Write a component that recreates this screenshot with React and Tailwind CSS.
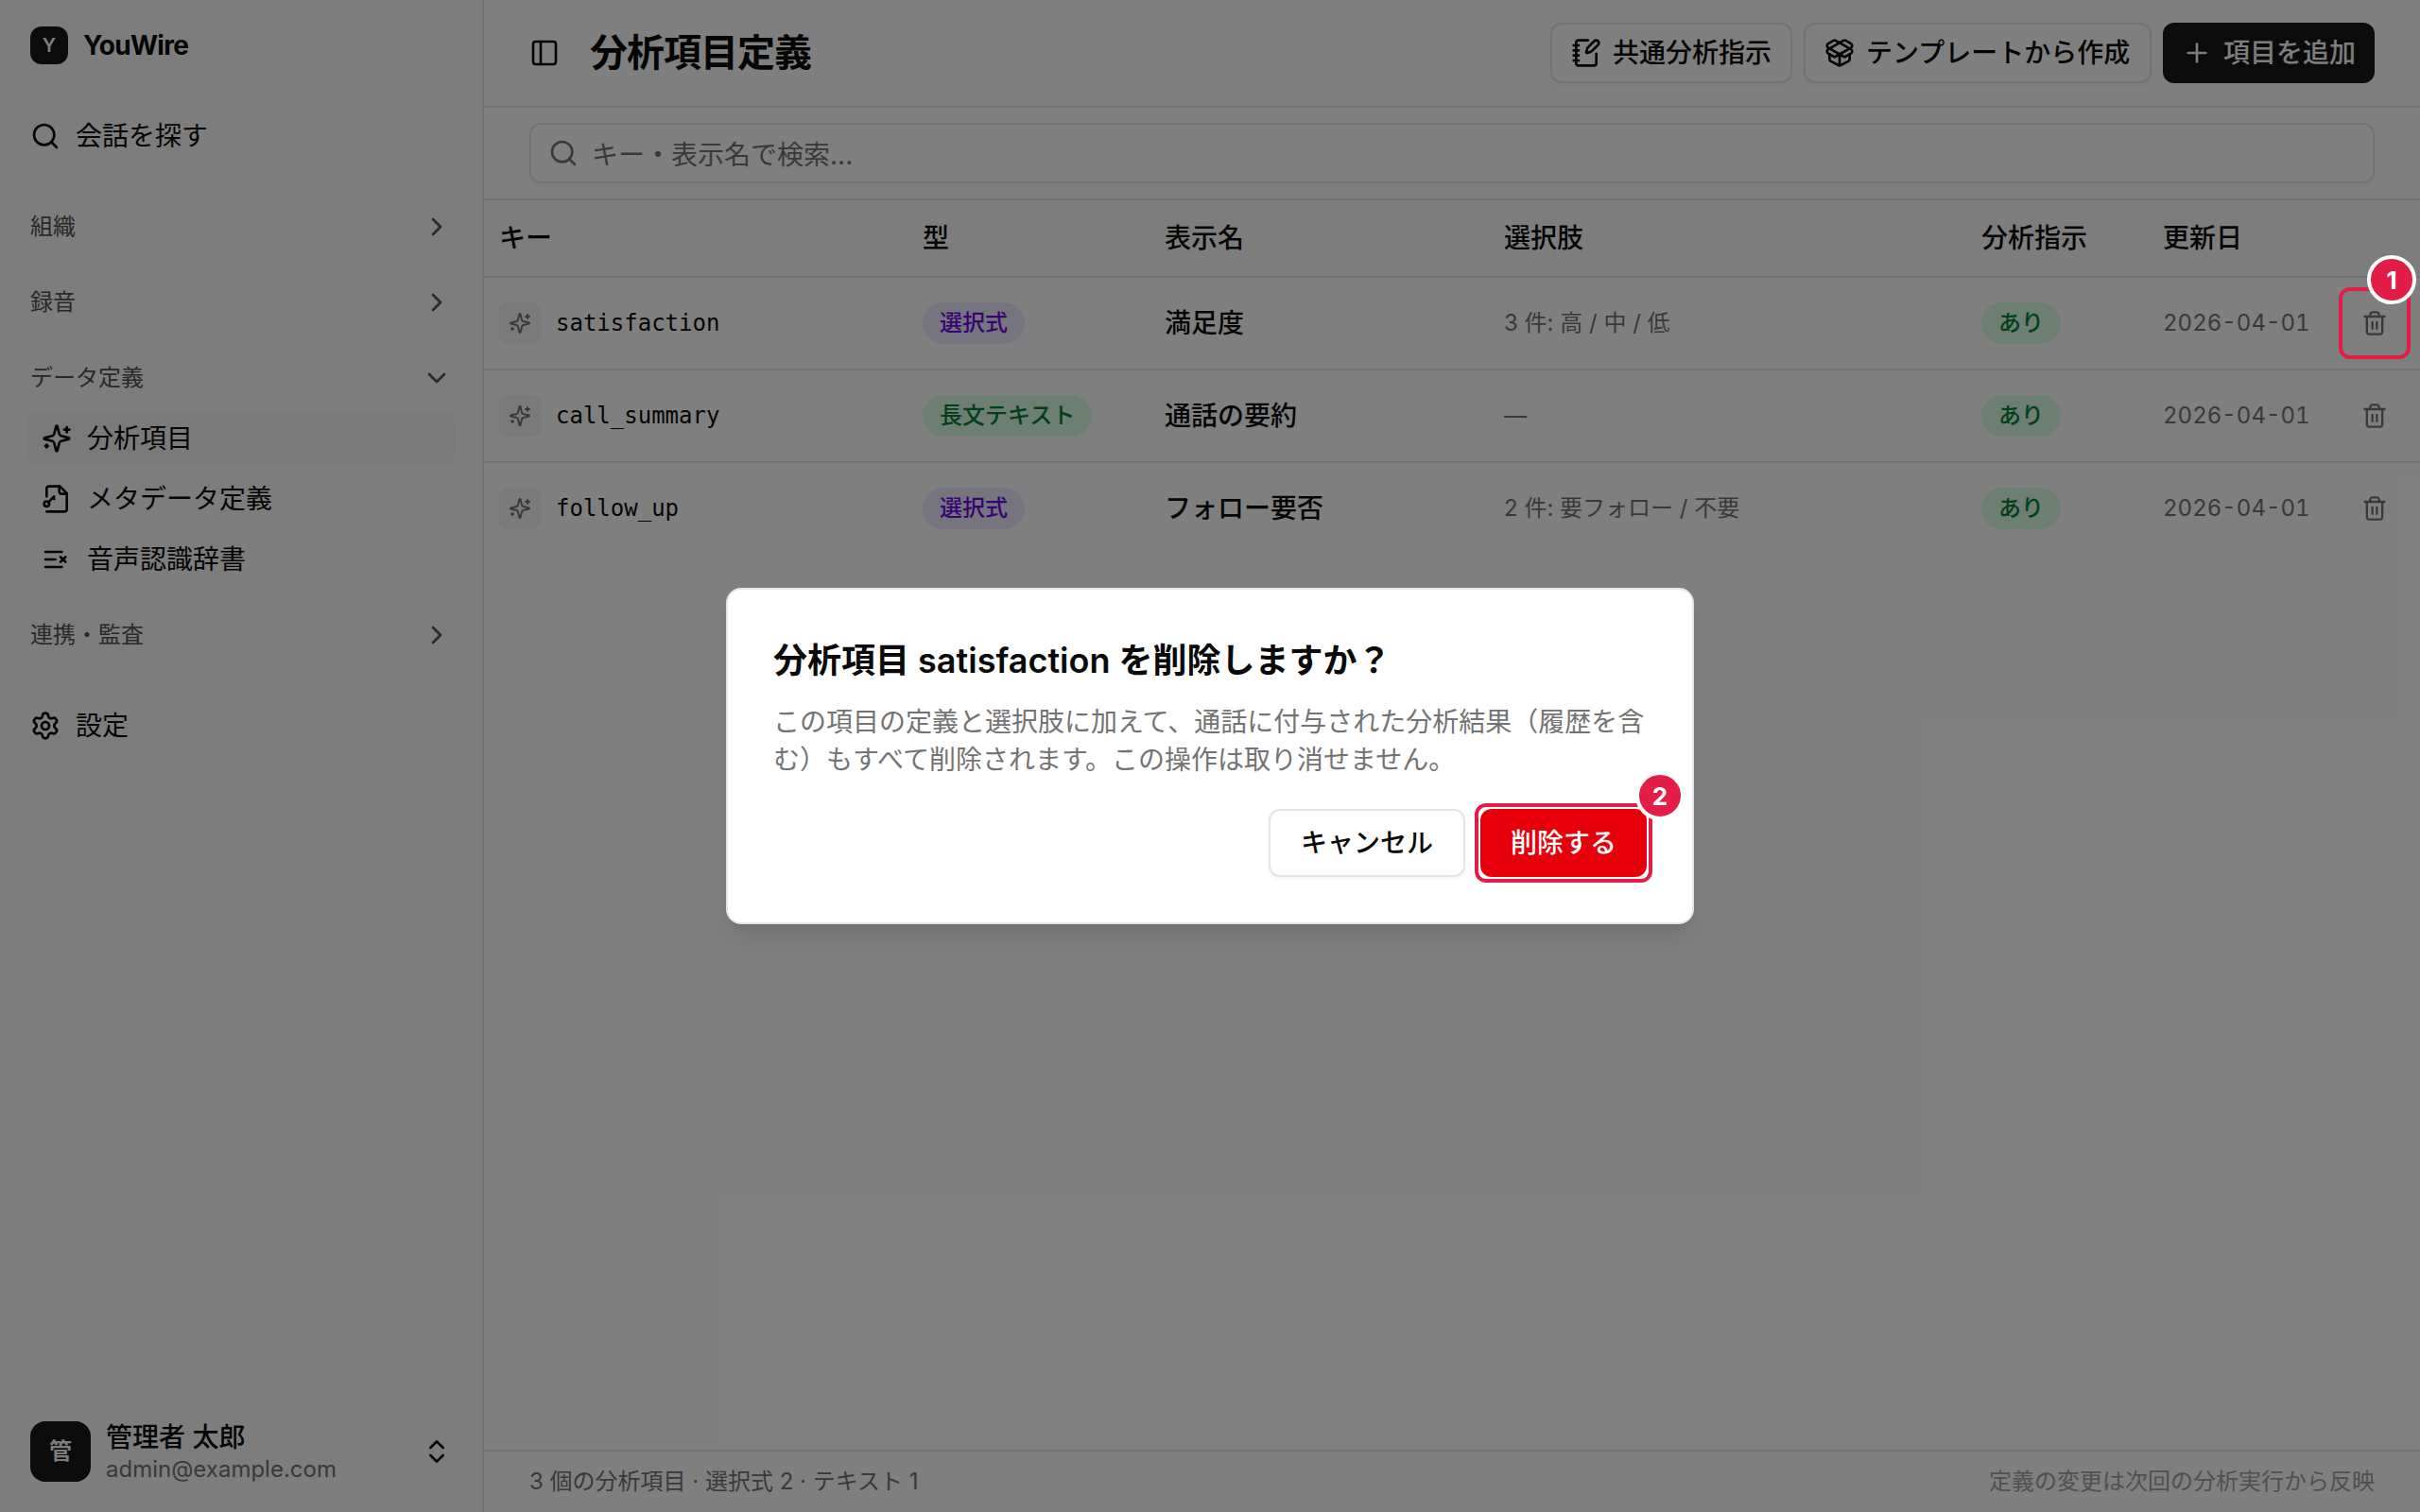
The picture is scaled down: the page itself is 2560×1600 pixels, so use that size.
import React from 'react';
import {
  ChevronDown,
  ChevronRight,
  ChevronsUpDown,
  NotebookPen,
  PackageOpen,
  PanelLeft,
  Plus,
  Search,
  Settings,
} from 'lucide-react';
import clsx from 'clsx';

const rows = [
  { key: 'satisfaction', type: '選択式', tone: 'violet', name: '満足度', options: '3 件: 高 / 中 / 低' },
  { key: 'call_summary', type: '長文テキスト', tone: 'green', name: '通話の要約', options: '—' },
  { key: 'follow_up', type: '選択式', tone: 'violet', name: 'フォロー要否', options: '2 件: 要フォロー / 不要' },
];

const columns = [
  { label: 'キー', width: 'w-[448px]' },
  { label: '型', width: 'w-64' },
  { label: '表示名', width: 'w-[359px]' },
  { label: '選択肢', width: 'w-[505px]' },
  { label: '分析指示', width: 'w-48' },
  { label: '更新日', width: 'w-48' },
  { label: '', width: 'w-24' },
];

const Icon = ({ className, children }) => (
  <svg
    viewBox="0 0 24 24"
    fill="none"
    stroke="currentColor"
    strokeWidth="2"
    strokeLinecap="round"
    strokeLinejoin="round"
    className={clsx('shrink-0', className)}
  >
    {children}
  </svg>
);

const SparklesIcon = ({ className }) => (
  <Icon className={className}>
    <path d="M9.937 15.5A2 2 0 0 0 8.5 14.063l-6.135-1.582a.5.5 0 0 1 0-.962L8.5 9.936A2 2 0 0 0 9.937 8.5l1.582-6.135a.5.5 0 0 1 .963 0L14.063 8.5A2 2 0 0 0 15.5 9.937l6.135 1.581a.5.5 0 0 1 0 .964L15.5 14.063a2 2 0 0 0-1.437 1.437l-1.582 6.135a.5.5 0 0 1-.963 0z" />
    <path d="M20 3v4" />
    <path d="M22 5h-4" />
    <path d="M4 17v2" />
    <path d="M5 18H3" />
  </Icon>
);

const FileKeyIcon = ({ className }) => (
  <Icon className={className}>
    <path d="M4 10V4a2 2 0 0 1 2-2h8.5L20 7.5V20a2 2 0 0 1-2 2H4" />
    <path d="M14 2v4a2 2 0 0 0 2 2h4" />
    <circle cx="4" cy="16" r="2" />
    <path d="m10 10-4.5 4.5" />
    <path d="m9 11 1 1" />
  </Icon>
);

const ListXIcon = ({ className }) => (
  <Icon className={className}>
    <path d="M11 12H3" />
    <path d="M16 6H3" />
    <path d="M16 18H3" />
    <path d="m19 10-4 4" />
    <path d="m15 10 4 4" />
  </Icon>
);

const TrashIcon = ({ className }) => (
  <Icon className={className}>
    <path d="M3 6h18" />
    <path d="M19 6v14c0 1-1 2-2 2H7c-1 0-2-1-2-2V6" />
    <path d="M8 6V4c0-1 1-2 2-2h4c1 0 2 1 2 2v2" />
    <path d="M10 11v6" />
    <path d="M14 11v6" />
  </Icon>
);

const NavGroup = ({ label, open, children }) => (
  <div className="flex flex-col pb-4">
    <button className="flex h-16 items-center justify-between px-8 text-2xl text-[#525252]">
      <span className="pb-px">{label}</span>
      {open ? <ChevronDown className="size-8" /> : <ChevronRight className="size-8" />}
    </button>
    {children}
  </div>
);

const NavItem = ({ icon: ItemIcon, label, active }) => (
  <a
    className={clsx('mx-7 flex h-14 items-center gap-4 rounded-xl px-4 text-[28px]', active && 'bg-neutral-100')}
  >
    <ItemIcon className="size-8" />
    <span>{label}</span>
  </a>
);

const Sidebar = () => (
  <aside className="flex w-[512px] shrink-0 flex-col border-r-2 border-neutral-200 bg-neutral-50">
    <div className="mt-7 flex h-10 items-center gap-4 px-8">
      <div className="flex size-10 items-center justify-center rounded-xl bg-[#171717] text-xl font-semibold text-neutral-50">
        Y
      </div>
      <span className="text-[28px] font-bold tracking-tight">YouWire</span>
    </div>
    <a className="mt-11 flex h-16 items-center gap-4 px-8 text-[28px]">
      <Search className="size-8" />
      会話を探す
    </a>
    <nav className="mt-8 flex flex-col">
      <NavGroup label="組織" />
      <NavGroup label="録音" />
      <NavGroup label="データ定義" open>
        <div className="mt-1 mb-1 flex flex-col gap-2">
          <NavItem icon={SparklesIcon} label="分析項目" active />
          <NavItem icon={FileKeyIcon} label="メタデータ定義" />
          <NavItem icon={ListXIcon} label="音声認識辞書" />
        </div>
      </NavGroup>
      <NavGroup label="連携・監査" />
      <a className="mt-4 flex h-16 items-center gap-4 px-8 text-[28px]">
        <Settings className="size-8" />
        設定
      </a>
    </nav>
    <div className="mt-auto mb-8 flex h-16 items-center gap-4 px-8">
      <div className="flex size-16 items-center justify-center rounded-2xl bg-[#171717] text-2xl font-semibold text-neutral-50">
        管
      </div>
      <div className="flex flex-1 flex-col pt-0.5">
        <span className="text-[28px] leading-9 font-medium">管理者 太郎</span>
        <span className="text-2xl leading-8 text-neutral-500">admin@example.com</span>
      </div>
      <ChevronsUpDown className="size-8" />
    </div>
  </aside>
);

const HeaderButton = ({ icon: ButtonIcon, children, primary, className }) => (
  <button
    className={clsx(
      'flex h-16 shrink-0 items-center gap-3 rounded-xl px-5 text-[28px] font-medium whitespace-nowrap',
      primary
        ? 'bg-[#171717] text-neutral-50'
        : 'border-2 border-neutral-200 bg-white shadow-[0_2px_4px_rgba(0,0,0,0.05)]',
      className
    )}
  >
    <ButtonIcon className="size-8" />
    {children}
  </button>
);

const Badge = ({ tone, children }) => (
  <span
    className={clsx(
      'inline-flex h-11 items-center rounded-full px-[18px] text-2xl font-medium',
      tone === 'violet' ? 'bg-violet-100 text-violet-700' : 'bg-green-100 text-green-700'
    )}
  >
    {children}
  </span>
);

const ItemTable = () => (
  <table className="w-full table-fixed border-separate border-spacing-0 text-left">
    <thead>
      <tr className="h-[82px] bg-neutral-50">
        {columns.map((col, i) => (
          <th key={i} className={clsx('border-b-2 border-neutral-200 px-4 text-[28px] font-medium', col.width)}>
            {col.label}
          </th>
        ))}
      </tr>
    </thead>
    <tbody>
      {rows.map((row) => (
        <tr
          key={row.key}
          className="h-[98px] *:border-b-2 *:border-neutral-200 *:px-4 *:py-0 last:*:border-transparent"
        >
          <td>
            <div className="flex items-center gap-4">
              <span className="flex size-11 items-center justify-center rounded-lg bg-neutral-100 text-neutral-500">
                <SparklesIcon className="size-6" />
              </span>
              <span className="font-['DejaVu_Sans_Mono',monospace] text-2xl">{row.key}</span>
            </div>
          </td>
          <td>
            <div className="flex">
              <Badge tone={row.tone}>{row.type}</Badge>
            </div>
          </td>
          <td className="text-[28px] font-medium">{row.name}</td>
          <td className="text-2xl text-neutral-500">{row.options}</td>
          <td>
            <div className="flex">
              <Badge tone="green">あり</Badge>
            </div>
          </td>
          <td className="text-2xl whitespace-nowrap text-neutral-500 tabular-nums">2026-04-01</td>
          <td>
            <button className="flex size-16 items-center justify-center text-neutral-500">
              <TrashIcon className="size-7" />
            </button>
          </td>
        </tr>
      ))}
    </tbody>
  </table>
);

// Numbered frame that points at one step of the flow
const Callout = ({ step, className, badgeClassName }) => (
  <div className={clsx('pointer-events-none absolute rounded-xl border-4 border-[#e11d48]', className)}>
    <span
      className={clsx(
        'absolute flex size-[52px] items-center justify-center rounded-full border-4 border-white bg-[#e11d48] text-[26px] font-bold text-white',
        badgeClassName
      )}
    >
      {step}
    </span>
  </div>
);

const DeleteDialog = () => (
  <div className="w-[1024px] rounded-2xl border-2 border-neutral-200 bg-white p-12 shadow-[0_20px_30px_-6px_rgba(0,0,0,0.1),0_8px_12px_-8px_rgba(0,0,0,0.1)]">
    <h2 className="text-4xl leading-[54px] font-semibold">分析項目 satisfaction を削除しますか？</h2>
    <p className="mt-[18px] text-[28px] leading-10 text-neutral-500">
      この項目の定義と選択肢に加えて、通話に付与された分析結果（履歴を含む）もすべて削除されます。この操作は取り消せません。
    </p>
    <div className="mt-8 flex justify-end gap-4">
      <button className="h-[72px] rounded-xl border-2 border-neutral-200 bg-white px-8 text-[28px] font-medium shadow-[0_2px_4px_rgba(0,0,0,0.05)]">
        キャンセル
      </button>
      <div className="relative">
        <button className="h-[72px] rounded-xl bg-[#e7000b] px-8 text-[28px] font-medium text-white">削除する</button>
        <Callout step={2} className="-inset-1.5" badgeClassName="-top-[38px] -right-[38px]" />
      </div>
    </div>
  </div>
);

const App = () => {
  return (
    <div className="relative flex h-[1600px] w-[2560px] overflow-hidden bg-white font-['Inter','Noto_Sans_CJK_JP',sans-serif] text-neutral-950">
      <Sidebar />
      <main className="flex flex-1 flex-col">
        <header className="flex h-[114px] items-center gap-3 border-b-2 border-neutral-200 px-12">
          <PanelLeft className="size-8" />
          <h1 className="ml-5 flex-1 text-[40px] font-semibold tracking-tight">分析項目定義</h1>
          <HeaderButton icon={NotebookPen} className="w-64">
            共通分析指示
          </HeaderButton>
          <HeaderButton icon={PackageOpen} className="w-[368px]">
            テンプレートから作成
          </HeaderButton>
          <HeaderButton icon={Plus} primary>
            項目を追加
          </HeaderButton>
        </header>
        <div className="flex h-[98px] items-center border-b-2 border-neutral-200 px-12">
          <div className="flex h-16 flex-1 items-center gap-[14px] rounded-xl border-2 border-neutral-200 px-[18px] text-[28px] text-neutral-500 shadow-[0_2px_4px_rgba(0,0,0,0.05)]">
            <Search className="size-8" />
            <span className="pt-[3px]">キー・表示名で検索...</span>
          </div>
        </div>
        <ItemTable />
        <footer className="mt-auto flex h-[66px] items-center justify-between border-t-2 border-neutral-200 px-12 text-2xl text-neutral-500">
          <span>3 個の分析項目 · 選択式 2 · テキスト 1</span>
          <span className="text-neutral-400">定義の変更は次回の分析実行から反映</span>
        </footer>
      </main>
      <div className="absolute inset-0 flex items-center justify-center bg-black/50">
        <DeleteDialog />
        <Callout step={1} className="top-[304px] left-[2474px] size-[76px]" badgeClassName="-top-[38px] -right-[10px]" />
      </div>
    </div>
  );
};

export default App;
